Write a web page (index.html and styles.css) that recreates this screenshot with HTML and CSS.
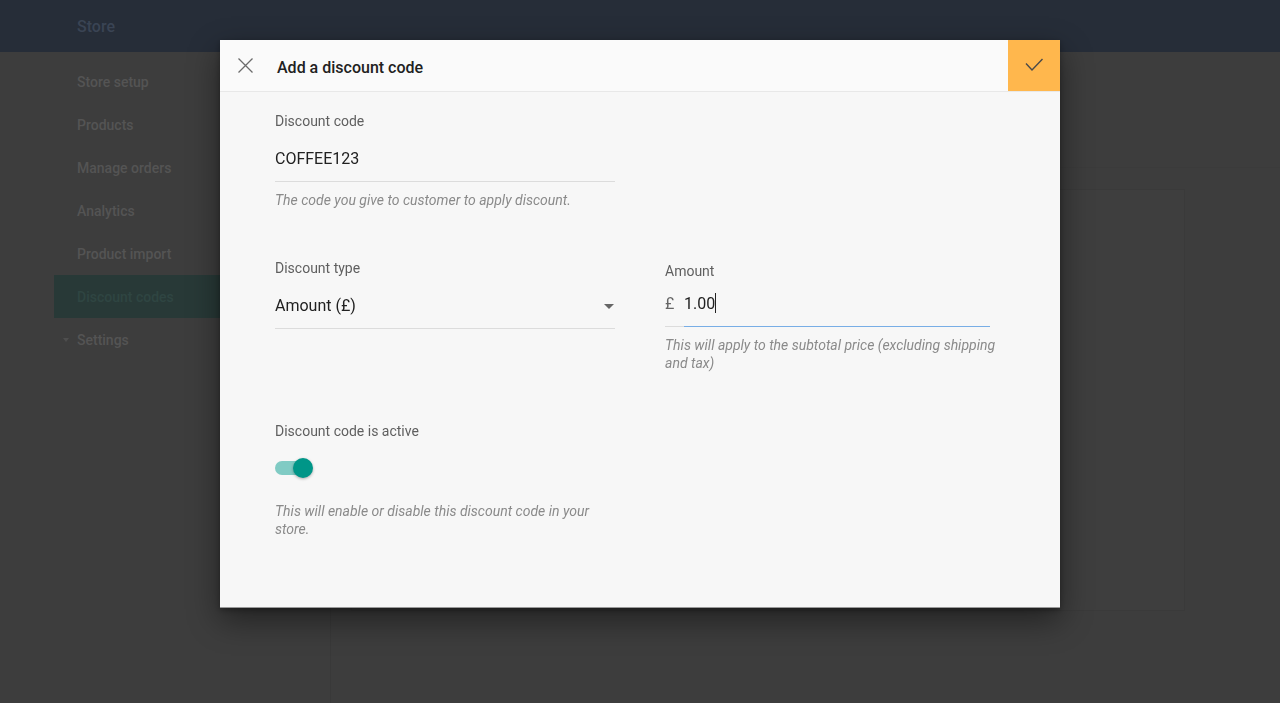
FILE: index.html
```html
<!DOCTYPE html>
<html lang="en">
<head>
    <meta charset="UTF-8">
    <meta name="viewport" content="width=device-width, initial-scale=1.0">
    <title>Store - Discount codes</title>
    <link rel="stylesheet" href="styles.css">
</head>
<body>
    <div class="topbar">
        <div class="brand">Store</div>
    </div>

    <div class="layout">
        <div class="sidebar">
            <div class="nav-item">Store setup</div>
            <div class="nav-item">Products</div>
            <div class="nav-item">Manage orders</div>
            <div class="nav-item">Analytics</div>
            <div class="nav-item">Product import</div>
            <div class="nav-item active">Discount codes</div>
            <div class="nav-item has-caret"><span class="caret"></span>Settings</div>
        </div>
        <div class="main">
            <div class="page-head"></div>
            <div class="card"></div>
        </div>
    </div>

    <!-- dialog -->
    <div class="overlay">
        <div class="modal">
            <div class="modal-header">
                <button class="close-btn" aria-label="Close">
                    <svg width="15" height="15" viewBox="0 0 15 15">
                        <path d="M0.5 0.5 L14.5 14.5 M14.5 0.5 L0.5 14.5" stroke="#6b6b6b" stroke-width="1.3" fill="none"/>
                    </svg>
                </button>
                <div class="modal-title">Add a discount code</div>
                <button class="save-btn" aria-label="Save">
                    <svg width="52" height="51" viewBox="0 0 52 51">
                        <path d="M18 23.5 L24 30 L34.5 19" stroke="#4a4a4a" stroke-width="1.4" fill="none"/>
                    </svg>
                </button>
            </div>

            <div class="modal-body">
                <div class="field">
                    <div class="field-label">Discount code</div>
                    <div class="input">COFFEE123</div>
                    <div class="field-help">The code you give to customer to apply discount.</div>
                </div>

                <div class="field-row">
                    <div class="field">
                        <div class="field-label">Discount type</div>
                        <div class="input select">
                            <span>Amount (£)</span>
                            <span class="arrow"></span>
                        </div>
                    </div>
                    <div class="field amount">
                        <div class="field-label">Amount</div>
                        <div class="money">
                            <span class="prefix">£</span>
                            <span class="money-value">1.00<span class="cursor"></span></span>
                        </div>
                        <div class="field-help">This will apply to the subtotal price (excluding shipping and tax)</div>
                    </div>
                </div>

                <div class="field">
                    <div class="field-label">Discount code is active</div>
                    <div class="toggle">
                        <span class="track"></span>
                        <span class="thumb"></span>
                    </div>
                    <div class="field-help toggle-help">This will enable or disable this discount code in your store.</div>
                </div>
            </div>
        </div>
    </div>
</body>
</html>
```

FILE: styles.css
```css
* {
    margin: 0;
    padding: 0;
    box-sizing: border-box;
}
body {
    font-family: Roboto, 'Noto Sans', sans-serif;
    background: #3d3d3d;
    color: #222;
    height: 100vh;
    overflow: hidden;
}
.topbar {
    height: 52px;
    background: #262d38;
    display: flex;
    align-items: center;
    padding-left: 77px;
}
.brand {
    font-size: 16px;
    font-weight: 500;
    color: #3a4454;
}
.layout {
    display: flex;
    height: calc(100vh - 52px);
}
.sidebar {
    width: 330px;
    padding: 8px 0 0 54px;
}
.nav-item {
    height: 43px;
    display: flex;
    align-items: center;
    padding-left: 23px;
    font-size: 14px;
    font-weight: 500;
    color: #545454;
}
.nav-item.active {
    background: #283937;
    color: #2f4542;
}
.nav-item.has-caret {
    position: relative;
}
.caret {
    position: absolute;
    left: 9px;
    top: 20px;
    border-left: 3.5px solid transparent;
    border-right: 3.5px solid transparent;
    border-top: 4px solid #4e4e4e;
}
.main {
    flex: 1;
    border-left: 1px solid #393939;
    padding-right: 95px;
}
.page-head {
    height: 116px;
    border-bottom: 1px solid #3b3b3b;
    margin-right: -95px;
}
.card {
    margin: 21px 0 0 20px;
    height: 422px;
    border: 1px solid #3a3a3a;
    background: #3e3e3e;
}

/* dialog */
.overlay {
    position: fixed;
    inset: 0;
    display: flex;
    justify-content: center;
    align-items: flex-start;
    padding-top: 40px;
}
.modal {
    width: 840px;
    background: #f7f7f7;
    box-shadow: 0 12px 30px rgba(0, 0, 0, 0.45), 0 2px 6px rgba(0, 0, 0, 0.3);
    border-bottom: 1px solid #9a9a9a;
}
.modal-header {
    height: 52px;
    display: flex;
    align-items: center;
    background: #fafafa;
    border-bottom: 1px solid #e8e8e8;
}
.close-btn {
    width: 57px;
    height: 51px;
    border: none;
    background: none;
    display: flex;
    align-items: center;
    padding-left: 18px;
}
.modal-title {
    flex: 1;
    padding-top: 3px;
    font-size: 16px;
    font-weight: 500;
    color: #212121;
}
.save-btn {
    width: 52px;
    height: 51px;
    border: none;
    background: #ffb74d;
    display: flex;
}
.modal-body {
    padding: 19px 0 69px 55px;
}
.field {
    width: 340px;
}
.field-label {
    font-size: 14px;
    line-height: 20px;
    color: #5f5f5f;
}
.input {
    font-size: 16px;
    line-height: 24px;
    color: #212121;
    padding: 16px 0 10px;
    border-bottom: 1px solid #dcdcdc;
}
.field-help {
    margin-top: 9px;
    font-size: 14px;
    line-height: 18px;
    font-style: italic;
    color: #8a8a8a;
}
.field-row {
    display: flex;
    gap: 50px;
    margin: 49px 0;
}
.select {
    display: flex;
    justify-content: space-between;
    align-items: center;
    padding-top: 16px;
}
.arrow {
    margin-right: 1px;
    border-left: 5px solid transparent;
    border-right: 5px solid transparent;
    border-top: 5px solid #666;
}
.amount .field-label {
    margin-top: 3px;
}
.money {
    display: flex;
    font-size: 16px;
    line-height: 24px;
    width: 325px;
}
.prefix {
    width: 19px;
    padding: 11px 0 10px;
    color: #666;
    border-bottom: 1px solid #dcdcdc;
}
.money-value {
    flex: 1;
    padding: 11px 0 10px;
    color: #212121;
    border-bottom: 1px solid #78aee6;
}
.cursor {
    display: inline-block;
    width: 1px;
    height: 20px;
    background: #222;
    vertical-align: -4px;
}
.toggle {
    position: relative;
    width: 38px;
    height: 20px;
    margin-top: 17px;
}
.track {
    position: absolute;
    left: 0;
    top: 3px;
    width: 34px;
    height: 14px;
    border-radius: 7px;
    background: #80cbc4;
}
.thumb {
    position: absolute;
    left: 18px;
    top: 0;
    width: 20px;
    height: 20px;
    border-radius: 50%;
    background: #009688;
    box-shadow: 0 1px 3px rgba(0, 0, 0, 0.3);
}
.toggle-help {
    margin-top: 24px;
}
```
